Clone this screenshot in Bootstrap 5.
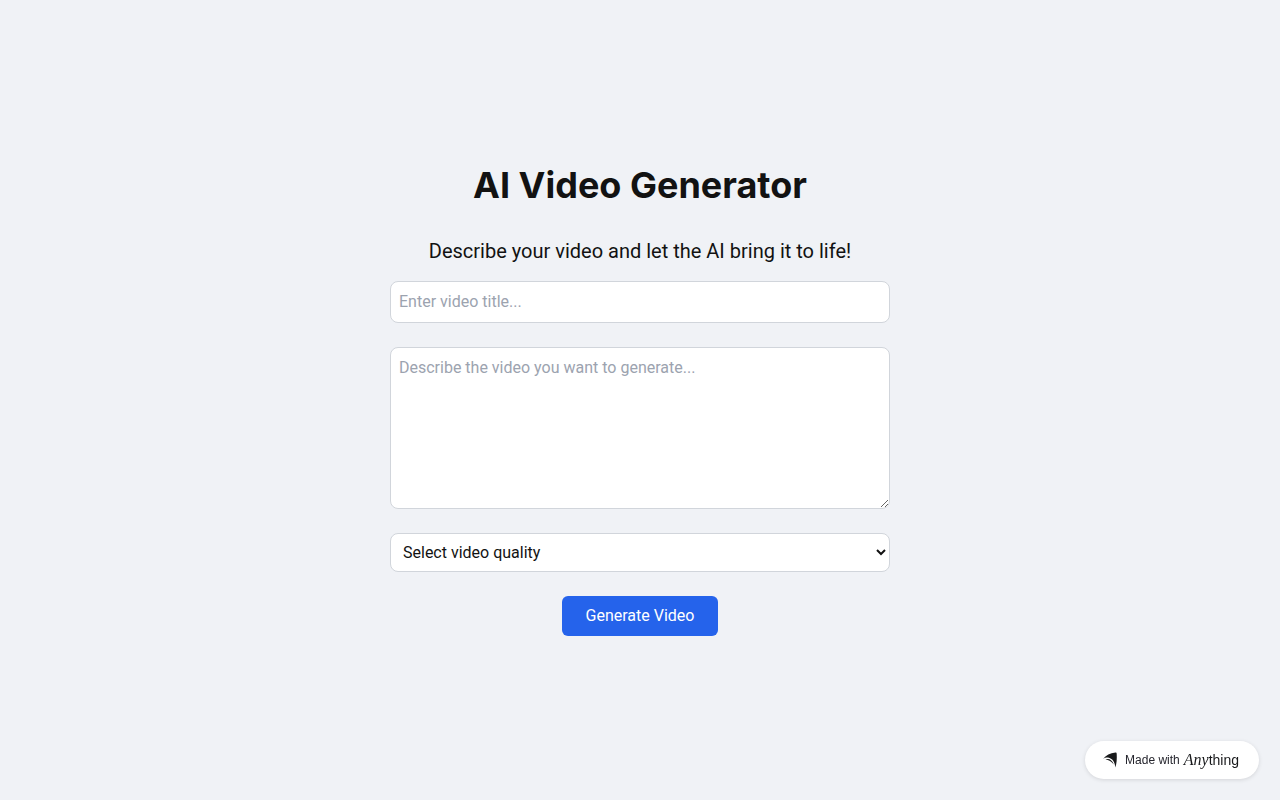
<!DOCTYPE html>
<html lang="en">
<head>
<meta charset="utf-8">
<meta name="viewport" content="width=device-width, initial-scale=1">
<title>AI Video Generator</title>
<link href="https://cdn.jsdelivr.net/npm/bootstrap@5.3.0/dist/css/bootstrap.min.css" rel="stylesheet">
<style>
  body { background: #f0f2f6; color: #121212; font-family: Roboto, sans-serif; }
  .generator { max-width: 500px; }
  .generator h1 { font: 700 36px/40px Inter, sans-serif; }
  .intro { font-size: 20px; line-height: 28px; }
  .field { display: block; width: 100%; padding: 8px; color: #121212; background: #fff; border: 1px solid #d1d5db; border-radius: 8px; line-height: 24px; }
  .field::placeholder { color: #9ca3af; opacity: 1; }
  textarea.field { height: 162px; }
  select.field { height: 39px; }
  .btn-generate { --bs-btn-color: #fff; --bs-btn-bg: #2563eb; --bs-btn-hover-color: #fff; --bs-btn-hover-bg: #1d4ed8; --bs-btn-padding-x: 24px; --bs-btn-padding-y: 8px; --bs-btn-border-radius: 6px; border: 0; line-height: 24px; }
  .made-with { right: 21px; bottom: 21px; height: 38px; padding: 0 20px 0 18px; background: #fff; color: #25252d; font: 12px/16px "Liberation Sans", sans-serif; box-shadow: 0 1px 4px rgba(0, 0, 0, .12); }
  .wordmark { font: 14px/20px "Liberation Sans", sans-serif; color: #18191b; }
  .wordmark em { font-family: "Liberation Serif", serif; font-size: 16px; }
</style>
<script src="https://cdn.jsdelivr.net/npm/bootstrap@5.3.0/dist/js/bootstrap.bundle.min.js" defer></script>
</head>
<body>
<main class="d-flex align-items-center justify-content-center min-vh-100 p-3">
  <form class="generator w-100 text-center">
    <h1 class="mb-0">AI Video Generator</h1>
    <p class="intro mt-4 pt-2 mb-3">Describe your video and let the AI bring it to life!</p>
    <label class="visually-hidden" for="title">Video title</label>
    <input class="field mb-4" id="title" type="text" placeholder="Enter video title...">
    <label class="visually-hidden" for="description">Video description</label>
    <textarea class="field mb-4" id="description" placeholder="Describe the video you want to generate..."></textarea>
    <label class="visually-hidden" for="quality">Video quality</label>
    <select class="field mb-4" id="quality">
      <option>Select video quality</option>
    </select>
    <button class="btn btn-generate" type="button">Generate Video</button>
  </form>
</main>
<a class="made-with position-fixed rounded-pill d-flex align-items-center text-decoration-none" href="#">
  <svg class="me-2" width="14" height="16" viewBox="0 0 14 16" fill="#18191b" aria-hidden="true">
    <path d="M0 7C3 3.500 7 1 12.500.6Q13.700.5 13.700 1.700C14 7 13.700 11.500 12.300 15.500C12 10.500 9.500 6.300 5 5.600C3.300 5.500 1.500 6 0 7Z"/>
    <path d="M2.500 7.800C5.500 6 9 7.800 10.800 12.600C8.500 9.300 5.800 7.900 2.500 7.800Z"/>
  </svg>
  <span class="me-1">Made with</span>
  <span class="wordmark"><em>Any</em>thing</span>
</a>
</body>
</html>
